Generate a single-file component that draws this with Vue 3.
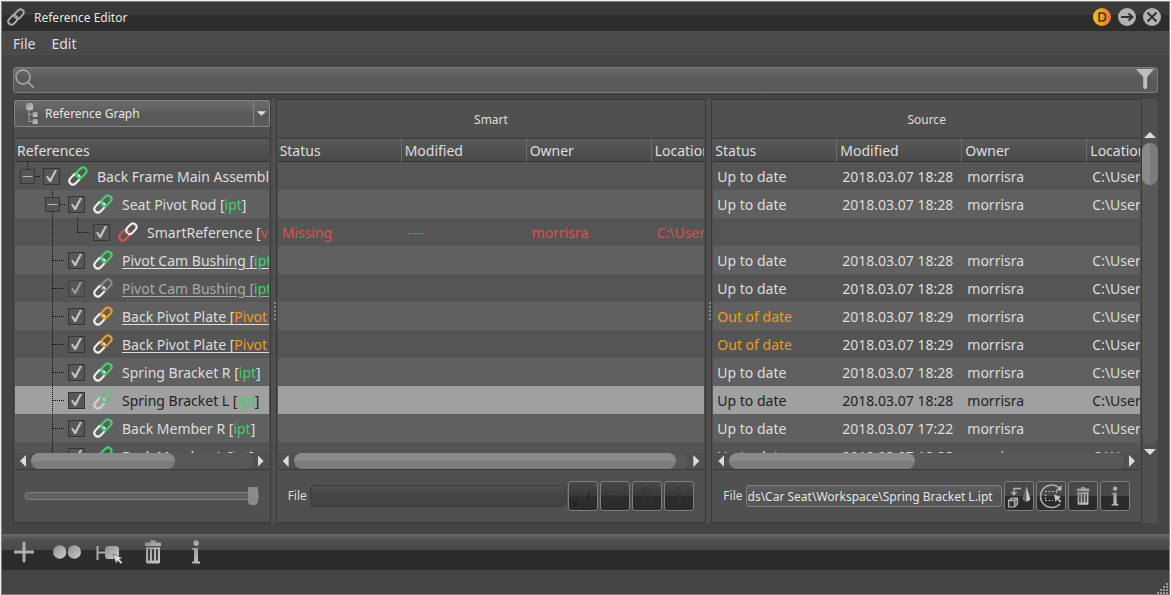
<script setup>
import { ref } from 'vue'

const search = ref('')
const view = ref('graph')
const zoom = ref(100)

const items = [
  { name: 'Back Frame Main Assembly', depth: 0, branch: true, tone: 'green' },
  { name: 'Seat Pivot Rod', ext: 'ipt', depth: 1, branch: true, tone: 'green' },
  { name: 'SmartReference', ext: 'vred', depth: 2, tone: 'red' },
  { name: 'Pivot Cam Bushing', ext: 'ipt', depth: 1, tone: 'green', linked: true },
  { name: 'Pivot Cam Bushing', ext: 'ipt', depth: 1, tone: 'gray', linked: true, dim: true },
  { name: 'Back Pivot Plate', ext: 'Pivot Plate', depth: 1, tone: 'orange', linked: true },
  { name: 'Back Pivot Plate', ext: 'Pivot Plate', depth: 1, tone: 'orange', linked: true },
  { name: 'Spring Bracket R', ext: 'ipt', depth: 1, tone: 'green' },
  { name: 'Spring Bracket L', ext: 'ipt', depth: 1, tone: 'green', selected: true },
  { name: 'Back Member R', ext: 'ipt', depth: 1, tone: 'green' },
  { name: 'Back Member L', ext: 'ipt', depth: 1, tone: 'green' },
]

const blank = () => ({ cells: ['', '', '', ''] })
const row = (status, time, tone) => ({
  cells: [status, '2018.03.07 ' + time, 'morrisra', 'C:\\Users'],
  tone,
})
const panels = [
  {
    title: 'Smart',
    file: '',
    disabled: true,
    scroll: 'long',
    rows: [
      blank(), blank(),
      { cells: ['Missing', '----', 'morrisra', 'C:\\Users'], all: 'red' },
      blank(), blank(), blank(), blank(), blank(), blank(), blank(), blank(),
    ],
  },
  {
    title: 'Source',
    file: 'ds\\Car Seat\\Workspace\\Spring Bracket L.ipt',
    disabled: false,
    scroll: 'half',
    rows: [
      row('Up to date', '18:28'),
      row('Up to date', '18:28'),
      blank(),
      row('Up to date', '18:28'),
      row('Up to date', '18:28'),
      row('Out of date', '18:29', 'orange'),
      row('Out of date', '18:29', 'orange'),
      row('Up to date', '18:28'),
      row('Up to date', '18:28'),
      row('Up to date', '17:22'),
      row('Up to date', '18:28'),
    ],
  },
]
const columns = ['Status', 'Modified', 'Owner', 'Location']
</script>

<template>
  <div class="window">
    <svg class="defs" aria-hidden="true">
      <defs>
        <linearGradient id="metal" x1="0" y1="0" x2="1" y2="1">
          <stop offset="0" stop-color="#8c8c8c" />
          <stop offset="1" stop-color="#cdcdcd" />
        </linearGradient>
        <linearGradient id="amber" x1="0" y1="0" x2="1" y2="0">
          <stop offset="0" stop-color="#fbc011" />
          <stop offset="1" stop-color="#ef7427" />
        </linearGradient>
        <symbol id="chain" viewBox="0 0 20 20">
          <g fill="none" stroke-width="2.2" stroke-linecap="round">
            <path class="lower" d="M8.9 7.6 Q7.2 7.4 6 8.6 L2.2 12.6 Q0.3 15 2.2 17.2 Q4.6 19.8 7.3 17.7 L10.6 14.3 Q12.8 11.8 10.9 9.3" />
            <path class="upper" d="M10.9 12.2 Q12.8 12.5 14 11.2 L17.6 7.4 Q19.6 4.9 17.7 2.7 Q15.3 0.4 12.8 2.3 L9.3 5.7 Q7.2 8.1 9 10.6" />
          </g>
        </symbol>
        <symbol id="trash" viewBox="0 0 18 24">
          <path fill-rule="evenodd" d="M6.5 2.5 V1 Q6.5 .3 7.3 .3 H10.7 Q11.5 .3 11.5 1 V2.5 H16 Q17 2.5 17 3.5 V6 H1 V3.5 Q1 2.5 2 2.5Z M2 7.2 H16 V22 Q16 23.4 14.6 23.4 H3.4 Q2 23.4 2 22Z M4.2 9 V20.5 H5.9 V9Z M8.1 9 V20.5 H9.9 V9Z M12.1 9 V20.5 H13.8 V9Z" />
        </symbol>
        <symbol id="info" viewBox="0 0 10 24">
          <circle cx="5" cy="3" r="2.7" />
          <path d="M1 8 H7 V21.5 H9 V23.4 H1 V21.5 H3 V10 H1Z" />
        </symbol>
      </defs>
    </svg>

    <header class="titlebar">
      <svg class="app-icon" viewBox="0 0 20 20"><use href="#chain" /></svg>
      <h1>Reference Editor</h1>
      <div class="controls">
        <button type="button" aria-label="Dock">
          <svg viewBox="0 0 18 18"><circle cx="9" cy="9" r="9" fill="url(#amber)" /><path d="M6.2 5 H9 Q12.6 5 12.6 9 Q12.6 13 9 13 H6.2Z" fill="none" stroke="#333" stroke-width="1.6" /></svg>
        </button>
        <button type="button" aria-label="Detach">
          <svg viewBox="0 0 18 18"><circle cx="9" cy="9" r="9" fill="#b2b2b2" /><path d="M3 9 H14 M10.5 5.5 L14.4 9 L10.5 12.5" fill="none" stroke="#303030" stroke-width="2" /></svg>
        </button>
        <button type="button" aria-label="Close">
          <svg viewBox="0 0 18 18"><circle cx="9" cy="9" r="9" fill="#b2b2b2" /><path d="M4.5 4.5 L13.5 13.5 M13.5 4.5 L4.5 13.5" fill="none" stroke="#303030" stroke-width="2" /></svg>
        </button>
      </div>
    </header>

    <nav class="menu">
      <button type="button">File</button>
      <button type="button">Edit</button>
    </nav>

    <div class="search">
      <svg class="magnifier" viewBox="0 0 20 20"><circle cx="8" cy="8" r="7" /><path d="M13 13 L19 19" /></svg>
      <input v-model="search" type="text" aria-label="Search references" />
      <button type="button" aria-label="Filter">
        <svg viewBox="0 0 18 20"><path d="M0 0 H18 L11.2 8 V18.5 Q9.2 21.5 7.2 18.5 V8Z" fill="#bebebe" /></svg>
      </button>
    </div>

    <main class="content">
      <section class="panel tree-panel">
        <div class="panel-top">
          <div class="combo">
            <svg class="combo-icon" viewBox="0 0 12 22">
              <path d="M3 5 V18.5 H7 M3 11.5 H7" fill="none" stroke="#999" stroke-width="1.2" />
              <g fill="url(#metal)"><rect x="0" y="0" width="7" height="7" rx="1.5" /><rect x="6.5" y="9" width="5" height="5" rx="1" /><rect x="6.5" y="16" width="5" height="5" rx="1" /></g>
            </svg>
            <select v-model="view" aria-label="View">
              <option value="graph">Reference Graph</option>
            </select>
            <span class="combo-arrow"><svg viewBox="0 0 10 5"><path d="M0 0 H10 L5 5Z" fill="#ddd" /></svg></span>
          </div>
        </div>
        <div class="list">
          <h2 class="tree-head">References</h2>
          <ul class="tree">
            <li v-for="(item, i) in items" :key="i" :class="{ selected: item.selected, dim: item.dim }">
              <svg class="guide" :class="'depth' + item.depth" height="28">
                <g fill="none" stroke="#0d0d0d" stroke-dasharray="1 1">
                  <path v-if="item.depth === 0" d="M12.5 0 V7 M20 14.5 H25" />
                  <path v-if="item.depth > 0" d="M37.5 0 V28" />
                  <path v-if="item.branch && item.depth === 1" d="M45 14.5 H50" />
                  <path v-if="item.depth === 1 && !item.branch" d="M38 14.5 H50" />
                  <path v-if="item.depth === 2" d="M62.5 0 V14.5 H75" />
                </g>
                <g v-if="item.branch" :transform="item.depth ? 'translate(30.5 7.5)' : 'translate(5.5 7.5)'">
                  <rect width="14" height="14" fill="#555" stroke="#383838" />
                  <path d="M2 7 H12" stroke="#b5b5b5" />
                </g>
              </svg>
              <label>
                <input type="checkbox" checked />
                <svg class="chain" :class="item.tone" viewBox="0 0 20 20"><use href="#chain" /></svg>
                <span class="name" :class="{ linked: item.linked }">{{ item.name }}<template v-if="item.ext"> [<span class="ext" :class="item.tone">{{ item.ext }}</span>]</template></span>
              </label>
            </li>
          </ul>
          <div class="hscroll short"><i class="arrow left"></i><div class="track"><div class="thumb"></div></div><i class="arrow right"></i></div>
        </div>
        <div class="panel-foot">
          <input v-model="zoom" class="slider" type="range" min="0" max="100" aria-label="Tree size" />
        </div>
      </section>

      <template v-for="(panel, p) in panels" :key="panel.title">
        <div class="splitter"><i></i></div>
        <section class="panel">
          <h2 class="panel-top">{{ panel.title }}</h2>
          <div class="list">
            <div class="table-view">
              <table>
                <thead>
                  <tr><th v-for="c in columns" :key="c" scope="col">{{ c }}</th></tr>
                </thead>
                <tbody>
                  <tr v-for="(r, i) in panel.rows" :key="i" :class="[r.all, { selected: items[i].selected }]">
                    <td v-for="(cell, j) in r.cells" :key="j" :class="j === 0 ? r.tone : null">{{ cell }}</td>
                  </tr>
                </tbody>
              </table>
            </div>
            <div class="hscroll" :class="panel.scroll"><i class="arrow left"></i><div class="track"><div class="thumb"></div></div><i class="arrow right"></i></div>
          </div>
          <div class="panel-foot">
            <label :for="'file' + p">File</label>
            <input :id="'file' + p" class="file" type="text" :value="panel.file" :disabled="panel.disabled" />
            <button type="button" :disabled="panel.disabled" aria-label="Convert">
              <svg viewBox="0 0 28 28">
                <path d="M16 6.5 H9 V12 M6.5 10 L9 12.8 L11.5 10" fill="none" stroke="#b4b4b4" stroke-width="1.3" />
                <path d="M3.5 18.5 L6.5 16 H12.5 V22 L9.5 25 H3.5Z M3.5 18.5 H9.5 V25 M9.5 18.5 L12.5 16" fill="#6a6a6a" stroke="#b0b0b0" stroke-width="1.2" /><path d="M4.5 19.5 H8.8 V24.2 H4.5Z" fill="#333" />
                <path d="M21.3 4 L17.2 17 Q19 19.5 21.3 19.5Z" fill="#666" /><path d="M21.3 4 L25.4 17 Q24 19.5 21.3 19.5Z" fill="#cacaca" />
              </svg>
            </button>
            <button type="button" :disabled="panel.disabled" aria-label="Reload selection">
              <svg viewBox="0 0 28 28">
                <path d="M22.5 6 A11.3 11.3 0 1 0 23 22" fill="none" stroke="#aaa" stroke-width="1.6" /><path d="M24.5 3 V8.5 H18.5Z" fill="#bbb" />
                <path d="M8 9.5 H20 M8 18.5 H16 M8.5 12 V17 M19.5 9 V12" fill="none" stroke="#b8b8b8" stroke-width="1.2" stroke-dasharray="2 1.5" />
                <path d="M17 12.5 L24 15 L21.5 16.5 L24.5 19.5 L23 20.5 L20.2 17.5 L18.5 20Z" fill="#c5c5c5" />
              </svg>
            </button>
            <button type="button" :disabled="panel.disabled" aria-label="Remove file">
              <svg viewBox="0 0 28 28" fill="url(#metal)"><use href="#trash" x="7" y="4" width="14" height="20" /></svg>
            </button>
            <button type="button" :disabled="panel.disabled" aria-label="File information">
              <svg viewBox="0 0 28 28" fill="url(#metal)"><use href="#info" x="9" y="4" width="10" height="20" /></svg>
            </button>
          </div>
        </section>
      </template>

      <div class="vscroll"><i class="arrow up"></i><div class="track"><div class="thumb"></div></div><i class="arrow down"></i></div>
    </main>

    <footer>
      <div class="toolbar">
        <button type="button" aria-label="Add"><svg width="20" height="24" viewBox="0 0 20 24"><path d="M10 3 V21 M1 12 H19" stroke="#b0b0b0" stroke-width="3" stroke-linecap="round" /></svg></button>
        <button type="button" aria-label="Duplicate"><svg width="28" height="24" viewBox="0 0 28 24" fill="url(#metal)"><circle cx="6.7" cy="12" r="6.7" /><circle cx="21.3" cy="12" r="6.7" /></svg></button>
        <button type="button" aria-label="Select node"><svg width="28" height="24" viewBox="0 0 28 24"><path d="M1.5 6 V20 M1.5 12.5 H10" stroke="#aaa" stroke-width="2" /><rect x="9" y="6" width="14" height="13" rx="3.5" fill="url(#metal)" /><path d="M17 14 L26.5 18 L23.5 19.3 L26.5 22.5 L24.8 24 L21.7 20.7 L20 23.5Z" fill="#ddd" stroke="#444" stroke-width=".6" /></svg></button>
        <button type="button" aria-label="Delete"><svg width="18" height="24" viewBox="0 0 18 24" fill="url(#metal)"><use href="#trash" /></svg></button>
        <button type="button" aria-label="Information"><svg width="10" height="24" viewBox="0 0 10 24" fill="url(#metal)"><use href="#info" /></svg></button>
      </div>
      <div class="status"><svg width="12" height="12" viewBox="0 0 12 12"><path d="M0 11 H12 M3 8 H12 M6 5 H12 M9 2 H12" stroke="#999" stroke-width="2" stroke-dasharray="2 1" /></svg></div>
    </footer>
  </div>
</template>

<style>
html, body, #app { height: 100%; margin: 0; }
body { box-sizing: border-box; padding: 1px 1px 0; background: #f0f0f0; }
</style>

<style scoped>
* { box-sizing: border-box; }
.window {
  display: flex; flex-direction: column; height: 100%;
  border: 1px solid #808080;
  background: #444; color: #dedede;
  font-family: "Noto Sans", "Open Sans", sans-serif; font-size: 14px; line-height: 20px;
}
.defs { position: absolute; width: 0; height: 0; }
button { padding: 0; border: 0; background: none; color: inherit; font: inherit; display: block; }
svg { display: block; }
h1, h2, ul { margin: 0; padding: 0; font-weight: 400; }

.titlebar { display: flex; align-items: center; height: 29px; flex: none; padding: 0 8px 0 5px; background: linear-gradient(#393939 0 13px, #2d2d2d 13px); }
.app-icon { width: 18px; height: 18px; stroke: #aaa; }
.titlebar h1 { flex: 1; margin-left: 9px; padding-top: 2px; font-size: 12px; color: #e8e8e8; }
.controls { display: flex; gap: 7px; }
.controls svg { width: 18px; height: 18px; }

.menu { display: flex; flex: none; gap: 16px; height: 24px; padding: 2px 11px 0; background: #4a4a4a; }

.search { display: flex; align-items: center; flex: none; height: 26px; margin: 12px 11px 6px; padding: 0 3px 2px 1px; border: 1px solid #7c7c7c; border-radius: 3px; background: linear-gradient(#6a6a6a, #595959 50%, #5b5b5b); }
.magnifier { width: 20px; height: 20px; fill: none; stroke: #aaa; stroke-width: 1.5; }
.search input { flex: 1; min-width: 0; height: 20px; padding: 0 4px; border: 0; outline: 0; background: none; color: inherit; font: inherit; }
.search svg { height: 20px; }
.search button svg { width: 18px; }

.content { display: flex; flex: 1; min-height: 0; margin: 0 11px; background: #505050; }
.panel { display: flex; flex-direction: column; flex: 1; min-width: 0; border: 1px solid #393939; }
.tree-panel { flex: 0 0 22.5%; }
.panel-top { flex: none; height: 37px; font-size: 12px; line-height: 40px; text-align: center; }
.combo { position: relative; display: flex; height: 27px; border: 1px solid #858585; border-radius: 2px; background: linear-gradient(#6c6c6c, #585858 60%, #5b5b5b); }
.combo-icon { position: absolute; left: 11px; top: 2px; width: 12px; height: 22px; }
.combo select { flex: 1; appearance: none; border: 0; padding: 0 30px; background: none; color: #e6e6e6; font: 12px/20px "Noto Sans", sans-serif; }
.combo-arrow { position: absolute; right: 0; top: 0; bottom: 0; width: 16px; display: grid; place-items: center; border-left: 1px solid #858585; pointer-events: none; }
.combo-arrow svg { width: 9px; height: 5px; }

.list { display: flex; flex-direction: column; flex: 1; min-height: 0; margin: 0 1px; border-bottom: 1px solid #393939; }
.tree-head, th { height: 25px; padding: 2px 3px 0; border-top: 2px solid #424242; border-bottom: 1px solid #333; background: linear-gradient(#585858, #494949); font-size: 14px; font-weight: 400; line-height: 20px; text-align: left; }
.tree-head { flex: none; }
.tree-head, th:first-child { padding-left: 2px; }
.tree { flex: 1; min-height: 0; overflow: hidden; list-style: none; }
.tree li { display: flex; height: 28px; background: #555; white-space: nowrap; }
.tree li:nth-child(even), tbody tr:nth-child(even) { background: #606060; }
.tree li.selected, tbody tr.selected { background: #a0a0a0; color: #222; }
.guide { flex: none; width: 28px; }
.guide.depth1 { width: 53px; }
.guide.depth2 { width: 78px; }
.tree label { display: flex; align-items: center; }
.tree input { appearance: none; display: grid; place-items: center; width: 17px; height: 17px; margin: 0 8px 0 0; border: 1px solid #363636; background: #575757; }
.tree input:checked::before { content: ""; width: 11px; height: 12px; background: #c4c4c4; clip-path: polygon(0 54%, 18% 50%, 36% 76%, 80% 0, 100% 0, 46% 100%, 30% 100%); }
.chain { flex: none; width: 20px; height: 20px; margin-right: 9px; stroke: #f0f0f0; --tone: #3bd36b; }
.chain.red { --tone: #f0f0f0; stroke: #dc5050; }
.chain.gray { --tone: #8b8b8b; }
.chain.orange { --tone: #f39a1b; }
.upper { stroke: var(--tone, #aaa); }
.selected .chain { opacity: .6; }
.name { padding-top: 2px; }
.dim { color: #aaa; }
.dim input { opacity: .6; }
.linked { text-decoration: underline; text-underline-offset: 2px; }
.ext.green, .ext.gray { color: #3bd36b; }
.ext.red, tr.red { color: #dc5050; }
.ext.orange, td.orange { color: #f39a1b; }

.table-view { flex: 1; min-height: 0; overflow: hidden; }
table { width: 100%; table-layout: fixed; border-collapse: separate; border-spacing: 0; }
th { width: 125px; border-right: 1px solid #6c6c6c; overflow: hidden; white-space: nowrap; }
th:first-child { width: 124px; }
th:last-child { width: auto; border-right: 0; }
tbody tr { background: #555; }
td { height: 28px; padding: 2px 5px 0; overflow: hidden; white-space: nowrap; }
td:first-child { padding-left: 4px; }
th:last-child, td:last-child { padding-right: 0; }

.hscroll { display: flex; align-items: center; flex: none; height: 16px; padding: 0 5px; gap: 5px; }
.track { flex: 1; background: #585858; border-radius: 8px; }
.hscroll .track { height: 16px; }
.hscroll .thumb { height: 16px; border-radius: 8px; background: linear-gradient(#8a8a8a 50%, #7c7c7c 50%); }
.short .thumb { width: 65%; }
.long .thumb { width: 97%; }
.half .thumb { width: 47%; }
.arrow { flex: none; background: #dcdcdc; }
.left { width: 6px; height: 12px; clip-path: polygon(0 50%, 100% 0, 100% 100%); }
.right { width: 6px; height: 12px; clip-path: polygon(0 0, 100% 50%, 0 100%); }
.up { width: 12px; height: 6px; clip-path: polygon(50% 0, 100% 100%, 0 100%); }
.down { width: 12px; height: 6px; clip-path: polygon(0 0, 100% 0, 50% 100%); }

.panel-foot { display: flex; align-items: center; flex: none; height: 52px; padding: 0 11px; font-size: 12px; }
.slider { appearance: none; width: 100%; height: 8px; margin: 0; border: 1px solid #808080; border-radius: 3px; background: #606060; }
.slider::-webkit-slider-thumb { appearance: none; width: 10px; height: 18px; border-radius: 1px 1px 4px 4px; background: #8a8a8a; }
.panel-foot label { margin-right: 3px; }
.file { flex: 1; min-width: 0; height: 22px; padding: 0 1px; border: 1px solid #7d7d7d; border-radius: 3px; background: linear-gradient(#606060, #535353 50%, #585858); color: #e6e6e6; font: inherit; }
.file:disabled { border-color: #3c3c3c; background: linear-gradient(#515151, #444 40%); }
.panel-foot button { flex: none; width: 30px; height: 30px; margin-left: 2px; border: 1px solid #7e7e7e; border-radius: 3px; background: linear-gradient(#484848 50%, #2b2b2b 50%); }
.panel-foot button svg { width: 28px; height: 28px; }
.panel-foot button:disabled { background: linear-gradient(#484848, #3c3c3c 45%, #2b2b2b 55%); }
.panel-foot button:disabled svg { filter: brightness(.3); opacity: .4; }

.splitter { flex: none; width: 5px; display: grid; align-items: center; justify-items: end; }
.splitter i { width: 2px; height: 18px; background: repeating-linear-gradient(#888 0 2px, transparent 2px 4px); }

.vscroll { flex: none; display: flex; flex-direction: column; align-items: center; width: 16px; padding: 33px 0 68px; gap: 5px; }
.vscroll .track { width: 16px; }
.vscroll .thumb { height: 42px; border-radius: 8px; background: linear-gradient(90deg, #8a8a8a 50%, #7c7c7c 50%); }

footer { flex: none; margin-top: 11px; }
.toolbar { display: flex; align-items: center; height: 36px; background: linear-gradient(#6a6a6a, #525252 5px, #484848 16px, #2c2c2c 16px); }
.toolbar button { display: grid; place-items: center; width: 43px; }
.status { display: flex; justify-content: flex-end; align-items: flex-end; height: 24px; }
</style>
